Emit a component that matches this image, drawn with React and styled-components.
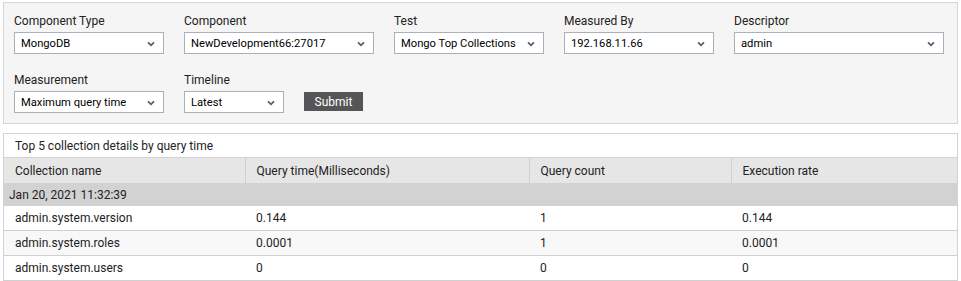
import React from "react";
import styled, { createGlobalStyle } from "styled-components";

const filters = [
  [
    { label: "Component Type", value: "MongoDB", width: 150 },
    { label: "Component", value: "NewDevelopment66:27017", width: 190 },
    { label: "Test", value: "Mongo Top Collections", width: 150 },
    { label: "Measured By", value: "192.168.11.66", width: 150 },
    { label: "Descriptor", value: "admin", width: 210 },
  ],
  [
    { label: "Measurement", value: "Maximum query time", width: 150 },
    { label: "Timeline", value: "Latest", width: 100 },
  ],
];

const columns = [
  { title: "Collection name", width: 241 },
  { title: "Query time(Milliseconds)", width: 284 },
  { title: "Query count", width: 202 },
  { title: "Execution rate" },
];

const rows = [
  ["admin.system.version", "0.144", "1", "0.144"],
  ["admin.system.roles", "0.0001", "1", "0.0001"],
  ["admin.system.users", "0", "0", "0"],
];

const GlobalStyle = createGlobalStyle`
  body {
    margin: 0;
    background: #ffffff;
    font-family: Roboto, "Liberation Sans", sans-serif;
    color: #222;
  }
`;

function Chevron() {
  return (
    <svg width="8" height="6" viewBox="0 0 8 6">
      <path d="M1 1.3 L4 4.3 L7 1.3" fill="none" stroke="#5e5e5e" strokeWidth="1.8" />
    </svg>
  );
}

function App() {
  return (
    <>
      <GlobalStyle />
      <Page>
        <FilterPanel>
          {filters.map((row, ri) => (
            <FilterRow key={ri}>
              {row.map(({ label, value, width }) => (
                <Field key={label}>
                  <Label>{label}</Label>
                  <Select $width={width}>
                    <span>{value}</span>
                    <Chevron />
                  </Select>
                </Field>
              ))}
              {ri === 1 && <Submit>Submit</Submit>}
            </FilterRow>
          ))}
        </FilterPanel>

        <TablePanel>
          <Table>
            <colgroup>
              {columns.map((c) => (
                <col key={c.title} style={c.width ? { width: c.width } : undefined} />
              ))}
            </colgroup>
            <thead>
              <tr>
                <Caption colSpan={4}>Top 5 collection details by query time</Caption>
              </tr>
              <tr>
                {columns.map((c) => (
                  <Th key={c.title}>{c.title}</Th>
                ))}
              </tr>
            </thead>
            <tbody>
              <tr>
                <GroupCell colSpan={4}>Jan 20, 2021 11:32:39</GroupCell>
              </tr>
              {rows.map((r, i) => (
                <Row key={r[0]} $striped={i % 2 === 1}>
                  {r.map((v, j) => (
                    <Td key={j}>{v}</Td>
                  ))}
                </Row>
              ))}
            </tbody>
          </Table>
        </TablePanel>
      </Page>
    </>
  );
}

const Page = styled.div`
  padding: 2px 3px 0 3px;
  width: 961px;
  box-sizing: border-box;
`;

const FilterPanel = styled.div`
  background: #f5f5f5;
  border: 1px solid #d6d6d6;
  padding: 10px 10px 10px 10px;
  display: flex;
  flex-direction: column;
  gap: 18px;
`;

const FilterRow = styled.div`
  display: flex;
  align-items: flex-end;
  gap: 20px;
`;

const Field = styled.div`
  display: flex;
  flex-direction: column;
  gap: 3px;
`;

const Label = styled.div`
  font-size: 12px;
  line-height: 16px;
  color: #222;
`;

const Select = styled.div`
  width: ${(p) => p.$width}px;
  height: 22px;
  box-sizing: border-box;
  background: #fff;
  border: 1px solid #a9afbb;
  display: flex;
  align-items: center;
  justify-content: space-between;
  padding: 0 8px 0 6px;
  font-size: 11.2px;
  color: #000;

  & span {
    white-space: nowrap;
  }

  & svg {
    flex: none;
    margin-top: 1px;
  }
`;

const Submit = styled.button`
  margin: 0 0 2px 0;
  height: 19px;
  width: 59px;
  padding: 0;
  border: none;
  background: #555555;
  color: #fff;
  font-family: Roboto, "Liberation Sans", sans-serif;
  font-size: 12px;
`;

const TablePanel = styled.div`
  margin-top: 9px;
  border: 1px solid #d3d3d3;
  border-bottom: none;
`;

const Table = styled.table`
  width: 100%;
  border-collapse: collapse;
  table-layout: fixed;
  font-size: 12px;
  color: #222;
`;

const Caption = styled.th`
  text-align: left;
  font-weight: normal;
  height: 23px;
  padding: 0 0 0 11px;
  background: #fff;
  border-bottom: 1px solid #d3d3d3;
`;

const Th = styled.th`
  text-align: left;
  font-weight: normal;
  height: 25px;
  padding: 0 0 0 11px;
  background: #e6e6e6;
  border-left: 1px solid #d0d0d0;
  &:first-child {
    border-left: none;
  }
`;

const GroupCell = styled.td`
  height: 23px;
  padding: 0 0 0 5px;
  background: #d2d2d2;
`;

const Row = styled.tr`
  background: ${(p) => (p.$striped ? "#f8f8f8" : "#fff")};
  border-bottom: 1px solid #d0d0d0;
`;

const Td = styled.td`
  height: 24px;
  padding: 0 0 0 11px;
`;

export default App;
